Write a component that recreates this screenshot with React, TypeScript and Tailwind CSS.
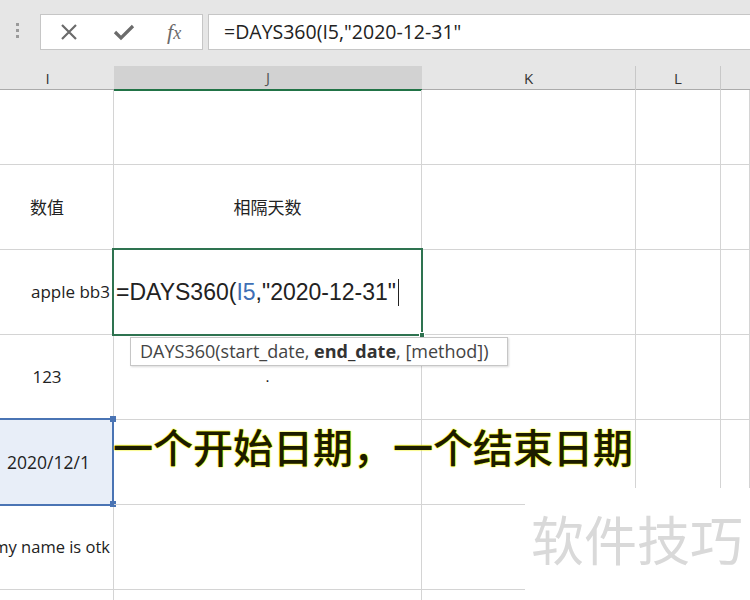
import React from 'react';

const sans = "font-['Liberation_Sans','Noto_Sans_CJK_SC',sans-serif]";
const ui = "font-['Open_Sans','Noto_Sans_CJK_SC',sans-serif]";
const cjk = "font-['Noto_Sans_CJK_SC',sans-serif]";

function Toolbar() {
  return (
    <div className="h-[66px] bg-[#e6e6e6] flex items-start pt-[14px]">
      {/* grip dots */}
      <div className="w-[34px] flex flex-col items-center gap-[3px] pt-[9px]">
        <span className="w-[3px] h-[3px] bg-[#9a9a9a]" />
        <span className="w-[3px] h-[3px] bg-[#9a9a9a]" />
        <span className="w-[3px] h-[3px] bg-[#9a9a9a]" />
      </div>
      <div className="ml-[6px] w-[163px] h-[36px] bg-white border border-[#c6c6c6] flex items-center">
        <svg className="ml-[19px]" width="18" height="18" viewBox="0 0 18 18">
          <path d="M2 2 L16 16 M16 2 L2 16" stroke="#6b6b6b" strokeWidth="2.2" fill="none" />
        </svg>
        <svg className="ml-[35px]" width="22" height="18" viewBox="0 0 22 18">
          <path d="M2 9 L8 15 L20 3" stroke="#6b6b6b" strokeWidth="3.2" fill="none" />
        </svg>
        <span className="ml-[32px] text-[#6b6b6b] italic text-[22px] font-['Liberation_Serif',serif] leading-none">
          f<span className="text-[18px]">x</span>
        </span>
      </div>
      <div className="ml-[5px] flex-1 h-[36px] bg-white border border-[#c6c6c6] border-r-0 flex items-center pl-[15px]">
        <span className={`${ui} text-[19.5px] text-[#222]`}>=DAYS360(I5,"2020-12-31"</span>
      </div>
    </div>
  );
}

function HeaderRow() {
  return (
    <div className={`h-[24px] grid grid-cols-[114px_308px_214px_85px_1fr] bg-[#e6e6e6] border-b border-[#ababab] text-[15px] text-[#333] ${ui}`}>
      <div className="flex items-center justify-center pr-[19px]">I</div>
      <div className="flex items-center justify-center bg-[#d2d2d2] border-b-2 border-[#217346] text-[#555]">J</div>
      <div className="flex items-center justify-center border-r border-[#c8c8c8]">K</div>
      <div className="flex items-center justify-center border-r border-[#c8c8c8]">L</div>
      <div />
    </div>
  );
}

const rowHeights = ['h-[75px]', 'h-[85px]', 'h-[85px]', 'h-[85px]', 'h-[85px]', 'h-[85px]', 'h-[11px]'];

export default function App() {
  const cell = 'border-r border-b border-[#d4d4d4] flex items-center';
  return (
    <div className="relative w-[750px] h-[600px] overflow-hidden bg-white">
      <Toolbar />
      <HeaderRow />
      <div className="grid grid-cols-[114px_308px_214px_85px_1fr]">
        {/* row 1 */}
        <div className={`${cell} ${rowHeights[0]}`} />
        <div className={`${cell} ${rowHeights[0]}`} />
        <div className={`${cell} ${rowHeights[0]}`} />
        <div className={`${cell} ${rowHeights[0]}`} />
        <div className={`${cell} ${rowHeights[0]}`} />
        {/* row 2 */}
        <div className={`${cell} ${rowHeights[1]} justify-center pr-[19px] ${cjk} text-[17px] text-[#222]`}>数值</div>
        <div className={`${cell} ${rowHeights[1]} justify-center ${cjk} text-[17px] text-[#222]`}>相隔天数</div>
        <div className={`${cell} ${rowHeights[1]}`} />
        <div className={`${cell} ${rowHeights[1]}`} />
        <div className={`${cell} ${rowHeights[1]}`} />
        {/* row 3 */}
        <div className={`${cell} ${rowHeights[2]} justify-end pr-[3px] ${ui} text-[17px] text-[#222] whitespace-nowrap`}>apple bb3</div>
        <div className={`${cell} ${rowHeights[2]} pl-[2px] ${sans} text-[23px] text-[#222] whitespace-nowrap`}>
          <span>
            =DAYS360(<span className="text-[#3f6fb5]">I5</span>,"2020-12-31"
          </span>
          <span className="ml-[2px] w-px h-[27px] bg-[#222]" />
        </div>
        <div className={`${cell} ${rowHeights[2]}`} />
        <div className={`${cell} ${rowHeights[2]}`} />
        <div className={`${cell} ${rowHeights[2]}`} />
        {/* row 4 */}
        <div className={`${cell} ${rowHeights[3]} justify-center pr-[19px] ${ui} text-[17px] text-[#222]`}>123</div>
        <div className={`${cell} ${rowHeights[3]} justify-center ${sans} text-[16px] text-[#222]`}>.</div>
        <div className={`${cell} ${rowHeights[3]}`} />
        <div className={`${cell} ${rowHeights[3]}`} />
        <div className={`${cell} ${rowHeights[3]}`} />
        {/* row 5 */}
        <div className={`${cell} ${rowHeights[4]} justify-center pr-[16px] bg-[#e8eef8] ${ui} text-[17.5px] text-[#222] whitespace-nowrap`}>2020/12/1</div>
        <div className={`${cell} ${rowHeights[4]} relative z-10 items-start pt-[2px]`}>
          <span className={`${cjk} font-medium text-[40px] leading-[48px] text-[#1c1c00] whitespace-nowrap -ml-[1px] [text-shadow:0_0_2px_#f5f500,0_0_1px_#f5f500,0_0_1px_#f5f500]`}>
            一个开始日期，一个结束日期
          </span>
        </div>
        <div className={`${cell} ${rowHeights[4]}`} />
        <div className={`${cell} ${rowHeights[4]}`} />
        <div className={`${cell} ${rowHeights[4]}`} />
        {/* row 6 */}
        <div className={`${cell} ${rowHeights[5]} justify-end pr-[3px] ${ui} text-[16.5px] text-[#222] whitespace-nowrap overflow-hidden`}>my name is otk</div>
        <div className={`${cell} ${rowHeights[5]}`} />
        <div className={`${cell} ${rowHeights[5]}`} />
        <div className={`${cell} ${rowHeights[5]}`} />
        <div className={`${cell} ${rowHeights[5]}`} />
        {/* row 7 */}
        <div className={`${cell} ${rowHeights[6]}`} />
        <div className={`${cell} ${rowHeights[6]}`} />
        <div className={`${cell} ${rowHeights[6]}`} />
        <div className={`${cell} ${rowHeights[6]}`} />
        <div className={`${cell} ${rowHeights[6]}`} />
      </div>

      {/* active editing cell border */}
      <div className="absolute left-[112px] top-[248px] w-[311px] h-[88px] border-2 border-[#2e7350] pointer-events-none" />
      <div className="absolute left-[419px] top-[332px] w-[6px] h-[6px] bg-[#2e7350] border border-white" />

      {/* function tooltip */}
      <div className={`absolute left-[130px] top-[337px] w-[378px] h-[29px] bg-white border border-[#c6c6c6] shadow-[1px_1px_2px_rgba(0,0,0,0.15)] flex items-center pl-[9px] ${ui} text-[18px] text-[#444] whitespace-nowrap`}>
        <span>
          DAYS360(start_date, <b className="font-bold text-[#333]">end_date</b>, [method])
        </span>
      </div>

      {/* selected I cell */}
      <div className="absolute left-[-2px] top-[418px] w-[116px] h-[88px] border-2 border-[#4a74b4] pointer-events-none" />
      <div className="absolute left-[110px] top-[416px] w-[6px] h-[6px] bg-[#4a74b4]" />
      <div className="absolute left-[110px] top-[501px] w-[6px] h-[6px] bg-[#4a74b4]" />

      {/* watermark */}
      <div className={`absolute left-[525px] top-[488px] w-[225px] h-[112px] bg-white flex items-start pt-[18px] pl-[6px] ${cjk} text-[53px] leading-[64px] text-[#d9d9d9] whitespace-nowrap`}>
        软件技巧
      </div>
    </div>
  );
}
